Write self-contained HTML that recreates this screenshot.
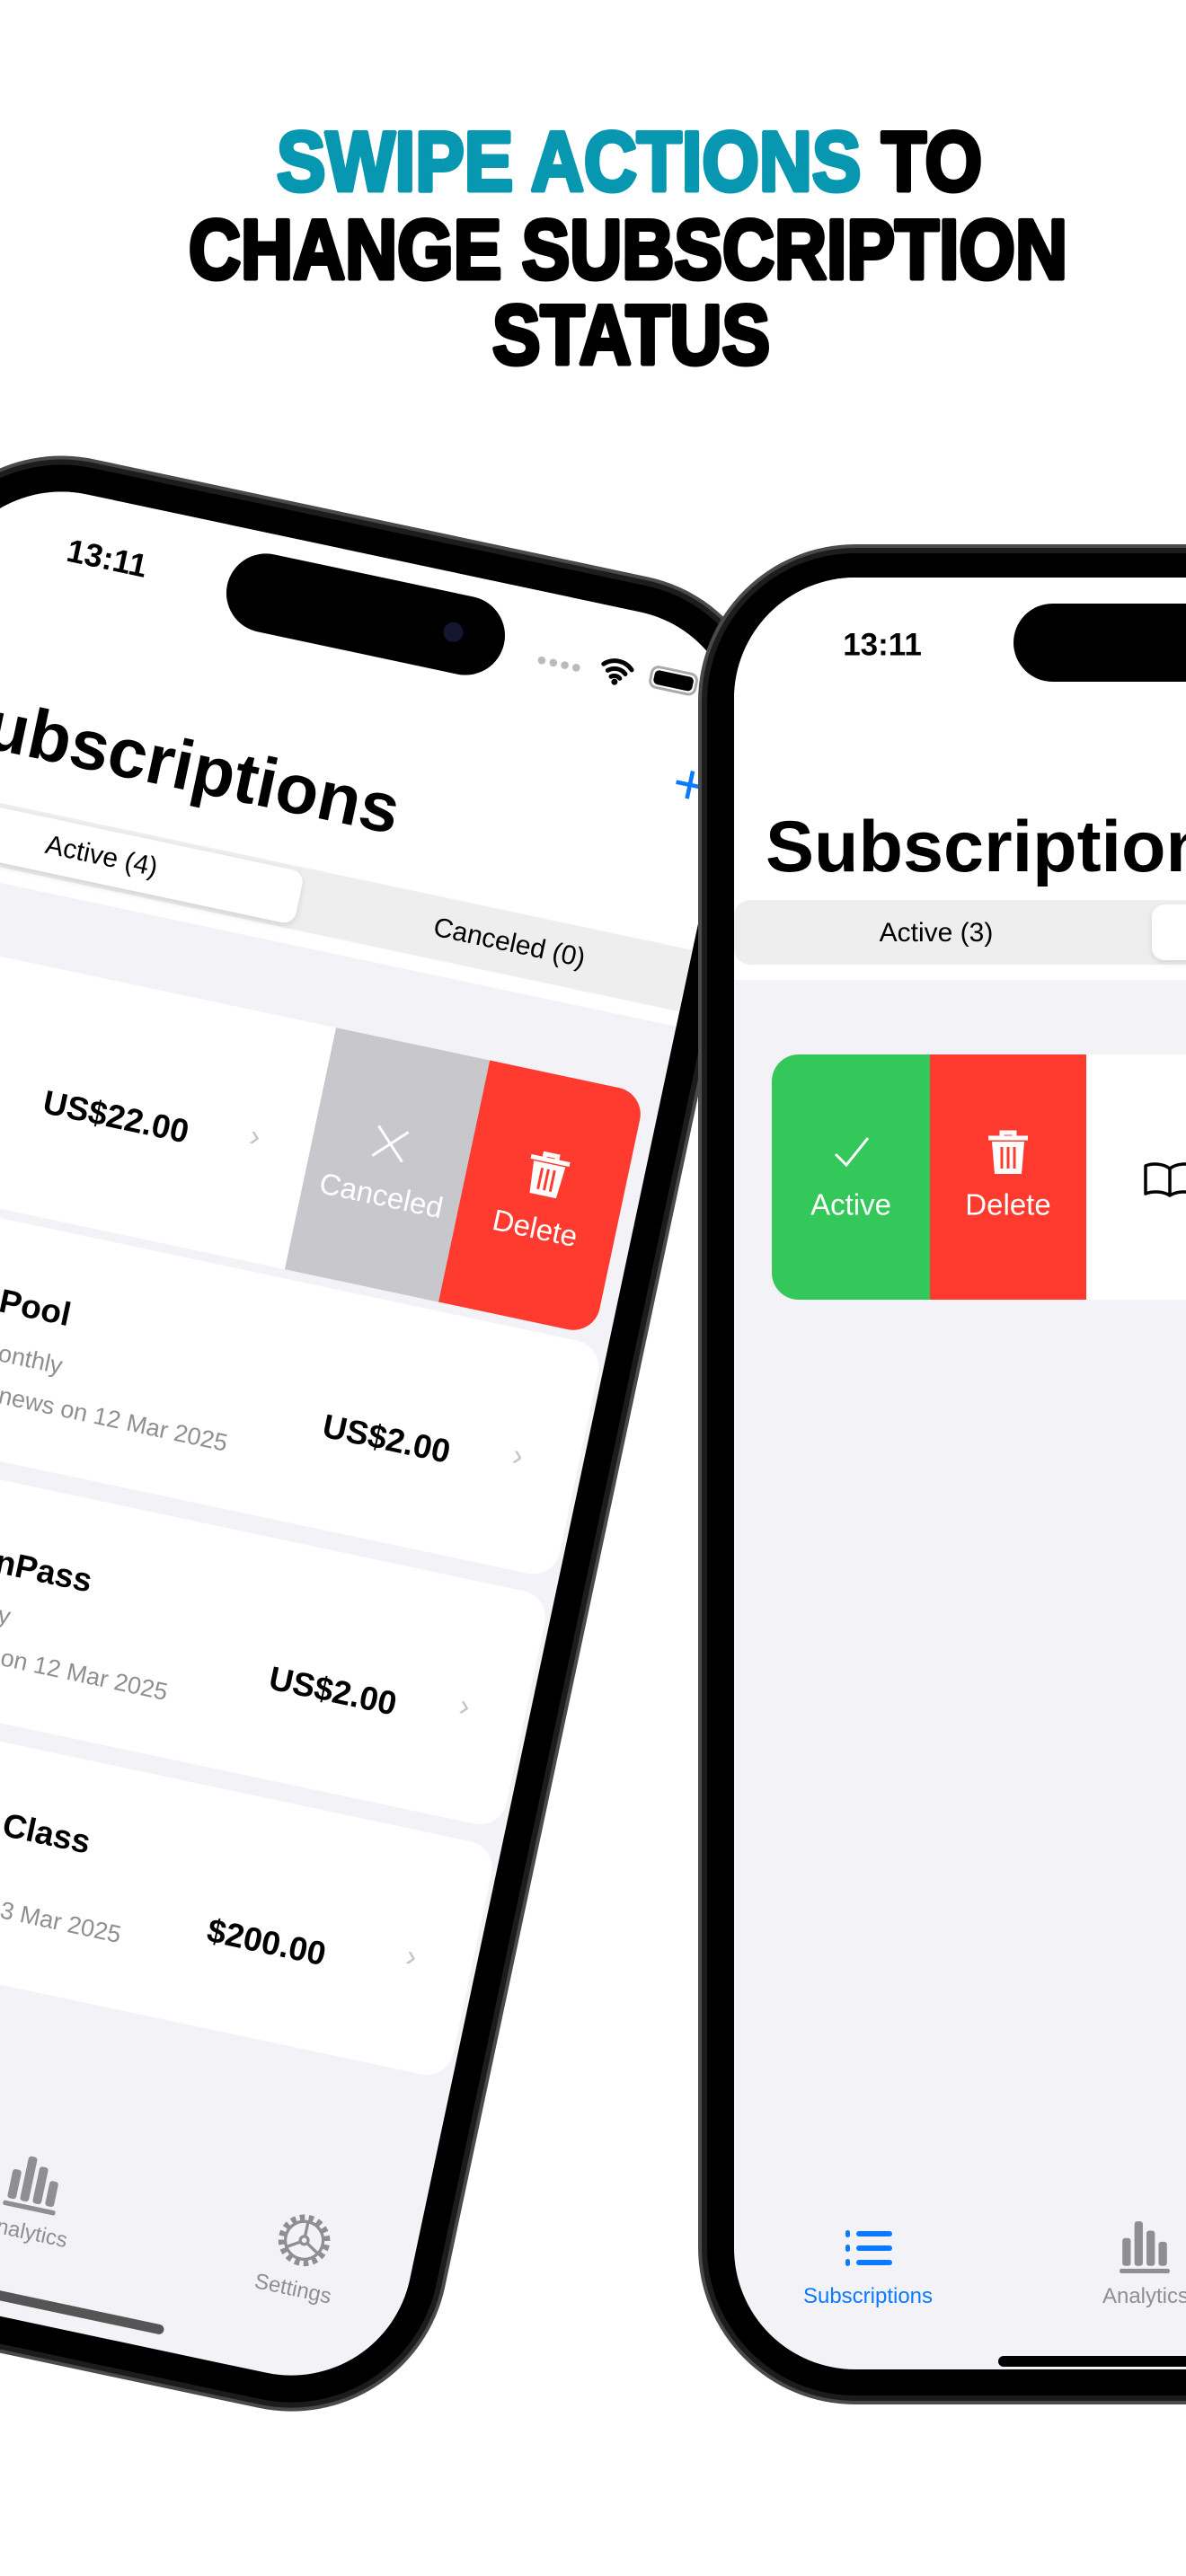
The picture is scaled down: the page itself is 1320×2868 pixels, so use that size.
<!DOCTYPE html>
<html><head><meta charset="utf-8">
<style>
*{margin:0;padding:0;box-sizing:border-box}
body{width:1320px;height:2868px;background:#fff;position:relative;overflow:hidden;font-family:"Liberation Sans",Arial,sans-serif}
.abs{position:absolute}
.frame{position:absolute;background:#4a4a4a;border-radius:175px}
.frame .in1{position:absolute;inset:4px;border-radius:171px;background:#1c1c1c}
.frame .in2{position:absolute;inset:10px;border-radius:165px;background:#000}
.screen{position:absolute;overflow:hidden;background:#f2f2f7;border-radius:135px}
.t{position:absolute;white-space:nowrap;line-height:1}
.c{transform:translate(-50%,-50%)}
.card{position:absolute;background:#fff;border-radius:30px}
.gray{color:#8e8e93}
</style></head><body>

<svg class="abs" style="left:0;top:0" width="1320" height="440">
<g font-family="Liberation Sans, Arial, sans-serif" font-weight="900" stroke-width="5" stroke-linejoin="round">
<text x="308" y="212" font-size="94" textLength="785" lengthAdjust="spacingAndGlyphs"><tspan fill="#0797b0" stroke="#0797b0">SWIPE ACTIONS</tspan><tspan fill="#000" stroke="#000"> TO</tspan></text>
<text x="210" y="310" font-size="94" textLength="978" lengthAdjust="spacingAndGlyphs" fill="#000" stroke="#000">CHANGE SUBSCRIPTION</text>
<text x="548" y="405" font-size="94" textLength="309" lengthAdjust="spacingAndGlyphs" fill="#000" stroke="#000">STATUS</text>
</g></svg>

<!-- LEFT PHONE (rotated) -->
<div class="abs" style="left:-30.5px;top:496.4px;width:900px;height:2031px;transform-origin:0 0;transform:rotate(12deg)">
  <div class="frame" style="left:-40px;top:-13px;width:980px;height:2084px"><div class="in1"></div><div class="in2"></div></div>
  <div class="screen" style="left:0;top:27px;width:900px;height:2004px">
   <div class="abs" style="left:0;top:-44px;width:937px;height:2048px">
    <div class="abs" style="left:0;top:0;width:937px;height:487px;background:#fff"></div>
    <div class="t c" style="left:172px;top:109px;font-size:36px;font-weight:700">13:11</div>
    <div class="abs" style="left:309px;top:66px;width:315px;height:88px;background:#000;border-radius:44px"></div>
    <div class="abs" style="left:555px;top:98px;width:22px;height:22px;border-radius:11px;background:#151530"></div>
    <div class="t c" style="left:689px;top:119px;font-size:20px;color:#bbb;letter-spacing:1px">●●●●</div>
    <svg class="abs" style="left:733px;top:96px" width="40" height="34" viewBox="0 0 40 34"><path d="M4 13a23 23 0 0 1 32 0M10 19a15 15 0 0 1 20 0M15 25a8 8 0 0 1 10 0" stroke="#000" stroke-width="5" fill="none" stroke-linecap="round"/><circle cx="20" cy="30" r="3.5"/></svg>
    <div class="abs" style="left:790px;top:98px;width:54px;height:26px;border:3px solid #aaa;border-radius:9px;padding:2px"><div style="width:100%;height:100%;background:#000;border-radius:5px"></div></div>
    <div class="t c" style="left:859px;top:220px;font-size:64px;color:#0a7aff;font-weight:300">+</div>
    <div class="t" style="left:28px;top:277px;font-size:78px;font-weight:700">Subscriptions</div>
    <div class="abs" style="left:16px;top:400px;width:905px;height:70px;background:#eeeeef;border-radius:18px"></div>
    <div class="abs" style="left:20px;top:405px;width:440px;height:60px;background:#fff;border-radius:14px;box-shadow:0 3px 8px rgba(0,0,0,.12)"></div>
    <div class="t c" style="left:235px;top:435px;font-size:30px">Active (4)</div>
    <div class="t c" style="left:699px;top:435px;font-size:30px">Canceled (0)</div>
    <div class="abs" style="left:-300px;top:567px;width:832px;height:275px;background:#fff"></div>
    <div class="t c" style="left:311px;top:715px;font-size:37px;font-weight:600">US$22.00</div>
    <div class="t c" style="left:467px;top:704px;font-size:34px;color:#c4c4c7">&#x203A;</div>
    <div class="abs" style="left:530px;top:567px;width:177px;height:275px;background:#c7c7cc"></div>
    <svg class="abs" style="left:595px;top:660px" width="42" height="42"><path d="M4 4L38 38M38 4L4 38" stroke="#fff" stroke-width="3"/></svg>
    <div class="t c" style="left:618px;top:739px;font-size:33px;color:#fff">Canceled</div>
    <div class="abs" style="left:705px;top:567px;width:177px;height:275px;background:#ff3b30;border-radius:0 30px 30px 0"></div>
    <svg class="abs" style="left:770px;top:652px" width="48" height="52" viewBox="0 0 48 52"><path d="M2 10H46M17 10V4h14v6" stroke="#fff" stroke-width="5" fill="none"/><path d="M6 14h36l-3 36H9z" fill="#fff"/><path d="M17 20v24M24 20v24M31 20v24" stroke="#ff3b30" stroke-width="3"/></svg>
    <div class="t c" style="left:793px;top:739px;font-size:33px;color:#fff">Delete</div>
    <div class="card" style="left:-300px;top:852px;width:1195px;height:265px"></div>
    <div class="card" style="left:-300px;top:1137px;width:1195px;height:265px"></div>
    <div class="card" style="left:-300px;top:1422px;width:1195px;height:265px"></div>
    <div class="t" style="left:227px;top:923px;font-size:37px;font-weight:700">Pool</div>
    <div class="t gray" style="left:238px;top:986px;font-size:27px">onthly</div>
    <div class="t gray" style="left:248px;top:1032px;font-size:27px">news on 12 Mar 2025</div>
    <div class="t c" style="left:680px;top:1003px;font-size:37px;font-weight:600">US$2.00</div>
    <div class="t c" style="left:827px;top:991px;font-size:34px;color:#c4c4c7">&#x203A;</div>
    <div class="t" style="left:283px;top:1208px;font-size:37px;font-weight:700">nPass</div>
    <div class="t gray" style="left:298px;top:1271px;font-size:27px">y</div>
    <div class="t gray" style="left:311px;top:1317px;font-size:27px">on 12 Mar 2025</div>
    <div class="t c" style="left:680px;top:1290px;font-size:37px;font-weight:600">US$2.00</div>
    <div class="t c" style="left:827px;top:1276px;font-size:34px;color:#c4c4c7">&#x203A;</div>
    <div class="t" style="left:352px;top:1493px;font-size:37px;font-weight:700">Class</div>
    <div class="t gray" style="left:369px;top:1592px;font-size:27px">3 Mar 2025</div>
    <div class="t c" style="left:666px;top:1579px;font-size:37px;font-weight:600">$200.00</div>
    <div class="t c" style="left:827px;top:1561px;font-size:34px;color:#c4c4c7">&#x203A;</div>
    <svg class="abs" style="left:436px;top:1860px" width="66" height="66" viewBox="0 0 60 60"><g fill="#8e8e93"><rect x="6" y="22" width="9" height="30" rx="3"/><rect x="19" y="6" width="9" height="46" rx="3"/><rect x="32" y="14" width="9" height="38" rx="3"/><rect x="45" y="26" width="9" height="26" rx="3"/><rect x="3" y="55" width="54" height="5" rx="2"/></g></svg>
    <div class="t c gray" style="left:470px;top:1951px;font-size:24px">Analytics</div>
    <svg class="abs" style="left:745px;top:1864px" width="62" height="62" viewBox="0 0 56 56"><circle cx="28" cy="28" r="23" fill="none" stroke="#8e8e93" stroke-width="6" stroke-dasharray="5 4"/><circle cx="28" cy="28" r="19" fill="none" stroke="#8e8e93" stroke-width="3"/><circle cx="28" cy="28" r="4" fill="none" stroke="#8e8e93" stroke-width="3"/><path d="M28 24V9M31 30l13 8M25 30l-13 8" stroke="#8e8e93" stroke-width="3"/></svg>
    <div class="t c gray" style="left:775px;top:1951px;font-size:24px">Settings</div>
    <div class="abs" style="left:294px;top:2020px;width:350px;height:11px;background:#555;border-radius:6px"></div>
   </div>
  </div>
</div>

<!-- RIGHT PHONE -->
<div class="frame" style="left:777px;top:606px;width:1017px;height:2071px"><div class="in1"></div><div class="in2"></div></div>
<div class="screen" style="left:817px;top:643px;width:937px;height:1995px">
  <div class="abs" style="left:0;top:0;width:937px;height:448px;background:#fff"></div>
  <div class="t c" style="left:165px;top:75px;font-size:35px;font-weight:700">13:11</div>
  <div class="abs" style="left:311px;top:29px;width:315px;height:87px;background:#000;border-radius:44px"></div>
  <div class="t" style="left:35px;top:260px;font-size:81px;font-weight:700">Subscriptions</div>
  <div class="abs" style="left:0;top:359px;width:930px;height:72px;background:#eeeeef;border-radius:18px"></div>
  <div class="abs" style="left:465px;top:364px;width:460px;height:62px;background:#fff;border-radius:14px;box-shadow:0 3px 8px rgba(0,0,0,.1)"></div>
  <div class="t c" style="left:225px;top:396px;font-size:30px">Active (3)</div>
  <div class="abs" style="left:42px;top:531px;width:176px;height:273px;background:#34c759;border-radius:30px 0 0 30px"></div>
  <div class="abs" style="left:218px;top:531px;width:174px;height:273px;background:#ff3b30"></div>
  <div class="abs" style="left:392px;top:531px;width:545px;height:273px;background:#fff"></div>
  <svg class="abs" style="left:110px;top:618px" width="42" height="42"><path d="M3 24L15 36L39 6" stroke="#fff" stroke-width="3" fill="none"/></svg>
  <div class="t c" style="left:130px;top:698px;font-size:33px;color:#fff">Active</div>
  <svg class="abs" style="left:281px;top:614px" width="48" height="52" viewBox="0 0 48 52"><path d="M2 10H46M17 10V4h14v6" stroke="#fff" stroke-width="5" fill="none"/><path d="M6 14h36l-3 36H9z" fill="#fff"/><path d="M17 20v24M24 20v24M31 20v24" stroke="#ff3b30" stroke-width="3"/></svg>
  <div class="t c" style="left:305px;top:698px;font-size:33px;color:#fff">Delete</div>
  <svg class="abs" style="left:455px;top:650px" width="60" height="40" viewBox="0 0 60 40"><path d="M30 8C22 2 10 2 3 5V36C10 33 22 33 30 38C38 33 50 33 57 36V5C50 2 38 2 30 8ZM30 8V38" stroke="#000" stroke-width="3.5" fill="none" stroke-linejoin="round"/></svg>
  <svg class="abs" style="left:122px;top:1838px" width="56" height="44" viewBox="0 0 56 44"><g fill="#0a7aff"><rect x="2" y="2" width="5" height="8" rx="2.5"/><rect x="2" y="18" width="5" height="8" rx="2.5"/><rect x="2" y="34" width="5" height="8" rx="2.5"/><rect x="14" y="3" width="40" height="6" rx="3"/><rect x="14" y="19" width="40" height="6" rx="3"/><rect x="14" y="35" width="40" height="6" rx="3"/></g></svg>
  <div class="t c" style="left:149px;top:1914px;font-size:24px;color:#0a7aff">Subscriptions</div>
  <svg class="abs" style="left:424px;top:1826px" width="66" height="62" viewBox="0 0 60 60"><g fill="#8e8e93"><rect x="6" y="22" width="9" height="30" rx="3"/><rect x="19" y="4" width="9" height="48" rx="3"/><rect x="32" y="14" width="9" height="38" rx="3"/><rect x="45" y="26" width="9" height="26" rx="3"/><rect x="3" y="55" width="54" height="5" rx="2"/></g></svg>
  <div class="t c gray" style="left:458px;top:1914px;font-size:24px">Analytics</div>
  <div class="abs" style="left:294px;top:1980px;width:350px;height:12px;background:#000;border-radius:6px"></div>
</div>
</body></html>
